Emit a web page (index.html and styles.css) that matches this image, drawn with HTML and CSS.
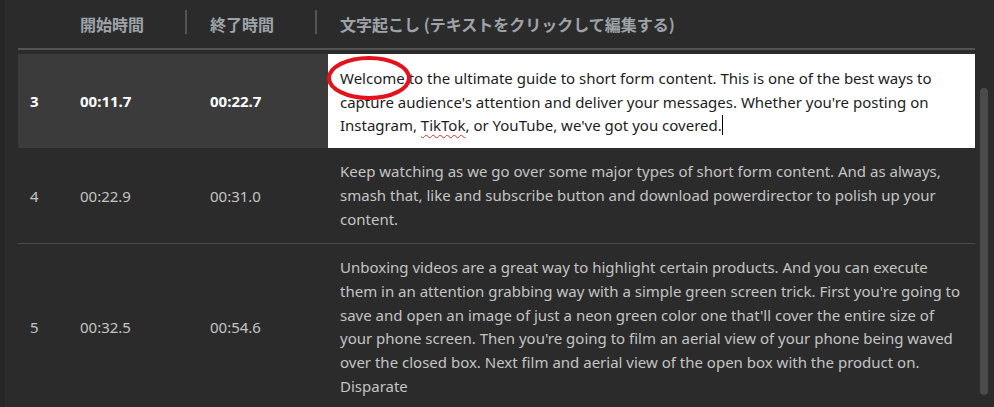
FILE: index.html
```html
<!DOCTYPE html>
<html lang="ja">
<head>
    <meta charset="UTF-8">
    <title>文字起こし</title>
    <link rel="stylesheet" href="styles.css">
</head>
<body>
    <div class="page">
        <div class="table">
            <!-- ヘッダー -->
            <div class="head">
                <div class="col-no"></div>
                <div class="col-start">開始時間</div>
                <div class="col-end"><span class="sep"></span>終了時間</div>
                <div class="col-text"><span class="sep"></span>文字起こし (テキストをクリックして編集する)</div>
            </div>

            <div class="row active">
                <div class="col-no">3</div>
                <div class="col-start">00:11.7</div>
                <div class="col-end">00:22.7</div>
                <div class="col-text editor">
                    Welcome to the ultimate guide to short form content. This is one of the best ways to<br>
                    capture audience's attention and deliver your messages. Whether you're posting on<br>
                    Instagram, <span class="typo">TikTok</span>, or YouTube, we've got you covered.<span class="caret"></span>
                    <svg class="mark" width="92" height="50" viewBox="0 0 92 50">
                        <ellipse cx="45" cy="24" rx="40" ry="20" fill="none" stroke="#e3121b" stroke-width="4"/>
                    </svg>
                </div>
            </div>

            <div class="row">
                <div class="col-no">4</div>
                <div class="col-start">00:22.9</div>
                <div class="col-end">00:31.0</div>
                <div class="col-text">
                    Keep watching as we go over some major types of short form content. And as always,<br>
                    smash that, like and subscribe button and download powerdirector to polish up your<br>
                    content.
                </div>
            </div>

            <div class="row">
                <div class="col-no">5</div>
                <div class="col-start">00:32.5</div>
                <div class="col-end">00:54.6</div>
                <div class="col-text">
                    Unboxing videos are a great way to highlight certain products. And you can execute<br>
                    them in an attention grabbing way with a simple green screen trick. First you're going to<br>
                    save and open an image of just a neon green color one that'll cover the entire size of<br>
                    your phone screen. Then you're going to film an aerial view of your phone being waved<br>
                    over the closed box. Next film and aerial view of the open box with the product on.<br>
                    Disparate
                </div>
            </div>
        </div>

        <div class="scrollbar">
            <div class="thumb"></div>
        </div>
    </div>
</body>
</html>
```

FILE: styles.css
```css
/* ページ全体 */
html, body {
    margin: 0;
    padding: 0;
}

body {
    background-color: #2b2b2b;
    border-left: 5px solid #262626;
    height: 407px;
    overflow: hidden;
    font-family: "Noto Sans", "Noto Sans CJK JP", sans-serif;
}

.page {
    display: flex;
}

.table {
    width: 957px;
    margin-left: 13px;
}

/* ヘッダー */
.head {
    display: flex;
    align-items: center;
    height: 48px;
    border-bottom: 2px solid #545454;
    margin-bottom: 4px;
    color: #9ea3aa;
    font-weight: bold;
    font-size: 16px;
    font-family: "Noto Sans CJK JP", sans-serif;
}

.head > div {
    position: relative;
}

.sep {
    display: inline-block;
    width: 2px;
    height: 24px;
    background-color: #545454;
    position: absolute;
    left: -25px;
    top: -2px;
}

.head .col-text .sep {
    left: -13px;
}

.col-no {
    width: 50px;
    padding-left: 12px;
    flex-shrink: 0;
}

.col-start {
    width: 130px;
    flex-shrink: 0;
}

.col-end {
    width: 118px;
    flex-shrink: 0;
}

.col-text {
    flex: 1;
    padding: 0 12px;
}

/* 行 */
.row {
    display: flex;
    align-items: center;
    border-bottom: 1px solid #4a4a4a;
    color: #c4c4c4;
    font-size: 15px;
}

.row .col-text {
    padding-top: 12px;
    padding-bottom: 12px;
    line-height: 23.7px;
}

.row.active {
    background-color: #3b3b3b;
    color: #fff;
    font-weight: bold;
    border-bottom: none;
}

.row.active .col-text {
    align-self: stretch;
    background-color: #fff;
    color: #1c1c1c;
    font-weight: normal;
    position: relative;
    padding-top: 13px;
    padding-bottom: 10px;
}

.typo {
    text-decoration: underline wavy #d23030;
    text-decoration-thickness: 1px;
    text-underline-offset: 3px;
}

.caret {
    display: inline-block;
    width: 1px;
    height: 20px;
    background-color: #000;
    vertical-align: -4px;
}

/* 注釈の赤い丸 */
.mark {
    position: absolute;
    left: -4px;
    top: 0;
}

/* スクロールバー */
.scrollbar {
    width: 19px;
}

.thumb {
    width: 8px;
    height: 307px;
    margin: 88px 0 0 5px;
    border-radius: 4px;
    background-color: #4b4b4b;
}
```
